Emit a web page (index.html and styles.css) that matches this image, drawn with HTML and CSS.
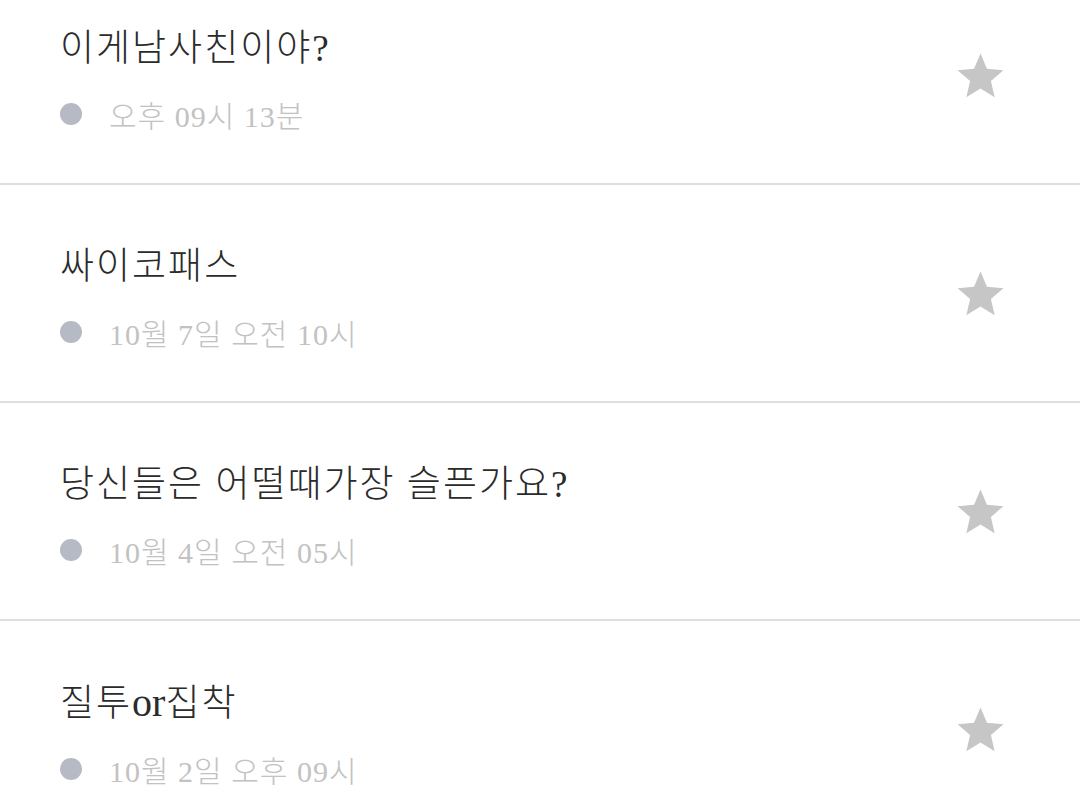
FILE: index.html
```html
<!DOCTYPE html>
<html lang="ko">
<head>
<meta charset="utf-8">
<link rel="stylesheet" href="styles.css">
</head>
<body>
<ul class="list">
  <li class="row">
    <div class="content">
      <div class="title">이게남사친이야?</div>
      <div class="meta"><span class="dot"></span><span class="time">오후 09시 13분</span></div>
    </div>
    <svg class="star" viewBox="0 0 24 24"><path d="M12 17.27L18.18 21l-1.64-7.03L22 9.24l-7.19-.61L12 2 9.19 8.63 2 9.24l5.46 4.73L5.82 21z"/></svg>
  </li>
  <li class="row">
    <div class="content">
      <div class="title">싸이코패스</div>
      <div class="meta"><span class="dot"></span><span class="time">10월 7일 오전 10시</span></div>
    </div>
    <svg class="star" viewBox="0 0 24 24"><path d="M12 17.27L18.18 21l-1.64-7.03L22 9.24l-7.19-.61L12 2 9.19 8.63 2 9.24l5.46 4.73L5.82 21z"/></svg>
  </li>
  <li class="row">
    <div class="content">
      <div class="title">당신들은 어떨때가장 슬픈가요?</div>
      <div class="meta"><span class="dot"></span><span class="time">10월 4일 오전 05시</span></div>
    </div>
    <svg class="star" viewBox="0 0 24 24"><path d="M12 17.27L18.18 21l-1.64-7.03L22 9.24l-7.19-.61L12 2 9.19 8.63 2 9.24l5.46 4.73L5.82 21z"/></svg>
  </li>
  <li class="row">
    <div class="content">
      <div class="title">질투<span class="latin">or</span>집착</div>
      <div class="meta"><span class="dot"></span><span class="time">10월 2일 오후 09시</span></div>
    </div>
    <svg class="star" viewBox="0 0 24 24"><path d="M12 17.27L18.18 21l-1.64-7.03L22 9.24l-7.19-.61L12 2 9.19 8.63 2 9.24l5.46 4.73L5.82 21z"/></svg>
  </li>
</ul>
</body>
</html>
```

FILE: styles.css
```css
html, body {
  margin: 0;
  padding: 0;
  background: #ffffff;
  overflow: hidden;
}

body {
  font-family: "Liberation Serif", "Noto Sans CJK KR", serif;
}

.list {
  list-style: none;
  margin: -33px 0 0 0;
  padding: 0;
}

.row {
  display: flex;
  align-items: flex-start;
  height: 216px;
  box-sizing: content-box;
  padding: 0 72px 0 60px;
  border-bottom: 2px solid #dedede;
}

.content {
  flex: 1;
  display: flex;
  flex-direction: column;
  padding-top: 60px;
}

.title {
  font-size: 37px;
  font-weight: 300;
  letter-spacing: 2px;
  line-height: 43px;
  color: #2b2b2b;
  white-space: nowrap;
}

.latin {
  font-size: 40px;
  letter-spacing: 0;
}

.meta {
  display: flex;
  align-items: center;
  margin-top: 29px;
  height: 36px;
}

.dot {
  width: 22px;
  height: 22px;
  border-radius: 50%;
  background: #b5bac4;
  margin-right: 27px;
  margin-bottom: 6px;
  flex: none;
}

.time {
  font-size: 30px;
  font-weight: 300;
  letter-spacing: 1px;
  line-height: 36px;
  color: #c2c2c2;
  white-space: nowrap;
}

.star {
  width: 55px;
  height: 55px;
  fill: #c6c6c6;
  flex: none;
  margin-top: 82px;
}
```
